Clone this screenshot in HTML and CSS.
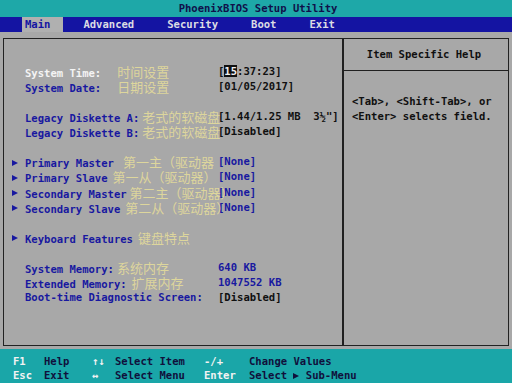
FILE: index.html
```html
<!DOCTYPE html>
<html>
<head>
<meta charset="utf-8">
<title>PhoenixBIOS Setup Utility</title>
<link rel="stylesheet" href="styles.css">
</head>
<body>
<div class="title">PhoenixBIOS Setup Utility</div>
<nav class="menubar">
  <span class="tab active">Main</span>
  <span class="tab">Advanced</span>
  <span class="tab">Security</span>
  <span class="tab">Boot</span>
  <span class="tab">Exit</span>
</nav>
<div class="frame">
  <section class="main">
    <div class="row"><span></span><span class="label sel">System Time:<span class="zh wide">时间设置</span></span><span class="val">[<span class="cursor">15</span>:37:23]</span></div>
    <div class="row"><span></span><span class="label">System Date:<span class="zh wide">日期设置</span></span><span class="val">[01/05/2017]</span></div>
    <div class="row"></div>
    <div class="row"><span></span><span class="label">Legacy Diskette A:<span class="zh tight">老式的软磁盘</span></span><span class="val">[1.44/1.25 MB  3½"]</span></div>
    <div class="row"><span></span><span class="label">Legacy Diskette B:<span class="zh tight">老式的软磁盘</span></span><span class="val">[Disabled]</span></div>
    <div class="row"></div>
    <div class="row"><span class="arrow"></span><span class="label">Primary Master<span class="zh pm">第一主（驱动器</span></span><span class="val blue">[None]</span></div>
    <div class="row"><span class="arrow"></span><span class="label">Primary Slave<span class="zh ps">第一从（驱动器）</span></span><span class="val blue">[None]</span></div>
    <div class="row"><span class="arrow"></span><span class="label">Secondary Master<span class="zh tight">第二主（驱动器）</span></span><span class="val blue">[None]</span></div>
    <div class="row"><span class="arrow"></span><span class="label">Secondary Slave<span class="zh ps">第二从（驱动器）</span></span><span class="val blue">[None]</span></div>
    <div class="row"></div>
    <div class="row"><span class="arrow"></span><span class="label">Keyboard Features<span class="zh ps">键盘特点</span></span><span class="val"></span></div>
    <div class="row"></div>
    <div class="row"><span></span><span class="label">System Memory:<span class="zh tight">系统内存</span></span><span class="val blue">640 KB</span></div>
    <div class="row"><span></span><span class="label">Extended Memory:<span class="zh ps">扩展内存</span></span><span class="val blue">1047552 KB</span></div>
    <div class="row"><span></span><span class="label">Boot-time Diagnostic Screen:</span><span class="val">[Disabled]</span></div>
  </section>
  <aside class="help">
    <div class="help-head">Item Specific Help</div>
    <div class="help-body">&lt;Tab&gt;, &lt;Shift-Tab&gt;, or<br>&lt;Enter&gt; selects field.</div>
  </aside>
</div>
<footer class="keys">
  <span class="key">F1</span><span class="desc">Help</span><span class="key">↑↓</span><span class="desc">Select Item</span><span class="key">-/+</span><span class="desc">Change Values</span>
  <span class="key">Esc</span><span class="desc">Exit</span><span class="key">↔</span><span class="desc">Select Menu</span><span class="key">Enter</span><span class="desc">Select <span class="tri"></span> Sub-Menu</span>
</footer>
</body>
</html>
```

FILE: styles.css
```css
* { box-sizing: border-box; }

html, body {
  margin: 0;
  padding: 0;
}

body {
  width: 512px;
  height: 383px;
  overflow: hidden;
  background: #a8a8a8;
  font-family: "DejaVu Sans Mono", "Liberation Mono", monospace;
  font-weight: bold;
  font-size: 10.55px;
  color: #101010;
}

.title {
  height: 17px;
  line-height: 17px;
  background: #1ea8a8;
  color: #10104a;
  text-align: center;
  padding-left: 4px;
}

.menubar {
  height: 15px;
  background: #1414a2;
  display: flex;
  gap: 17px;
  padding-left: 22px;
}

.tab {
  line-height: 15px;
  padding: 0 13px 0 3px;
  color: #dcdce4;
}

.tab.active {
  background: #b0b0b0;
  color: #1414a2;
}

.frame {
  margin: 6px 3px 0;
  height: 308px;
  border: 1px solid #222;
  display: grid;
  grid-template-columns: 338px 1fr;
}

.main {
  padding: 24.5px 0 0 8px;
}

.row {
  display: grid;
  grid-template-columns: 13px 193px 1fr;
  height: 15.13px;
  line-height: 15.13px;
  white-space: pre;
}

.label {
  color: #1818a0;
  white-space: pre;
}

.label.sel {
  color: #f4f4f4;
}

.val {
  color: #101010;
}

.val.blue {
  color: #1818a0;
}

.cursor {
  background: #101010;
  color: #f0f0f0;
}

.zh {
  font-family: "Noto Sans CJK SC", sans-serif;
  font-weight: normal;
  font-size: 13px;
  color: #e2da9c;
  opacity: 0.92;
}

.zh.wide { margin-left: 16px; }
.zh.tight { margin-left: 3px; }
.zh.pm { margin-left: 9px; }
.zh.ps { margin-left: 5px; }

.arrow {
  display: flex;
  align-items: center;
}

.arrow::before {
  content: "";
  display: block;
  width: 0;
  height: 0;
  border-top: 3.5px solid transparent;
  border-bottom: 3.5px solid transparent;
  border-left: 6px solid #1818a0;
}

.help {
  border-left: 2px solid #202020;
}

.help-head {
  height: 32px;
  line-height: 31px;
  border-bottom: 1px solid #202020;
  text-align: center;
  font-weight: normal;
  color: #101010;
  padding-right: 4px;
}

.help-head {
  font-weight: bold;
}

.help-body {
  padding: 22.5px 0 0 8px;
  line-height: 15.13px;
  color: #101010;
}

.keys {
  margin-top: 3px;
  height: 34px;
  background: #1aa6a8;
  padding: 5px 0 0 13px;
  display: grid;
  grid-template-columns: 31px 48px 23px 89px 45px 1fr;
  grid-auto-rows: 14px;
  line-height: 14px;
  white-space: pre;
}

.key {
  color: #f2f2f2;
}

.desc {
  color: #10103c;
}

.tri {
  display: inline-block;
  width: 0;
  height: 0;
  border-top: 3.5px solid transparent;
  border-bottom: 3.5px solid transparent;
  border-left: 6px solid #10103c;
  vertical-align: 0px;
}
```
